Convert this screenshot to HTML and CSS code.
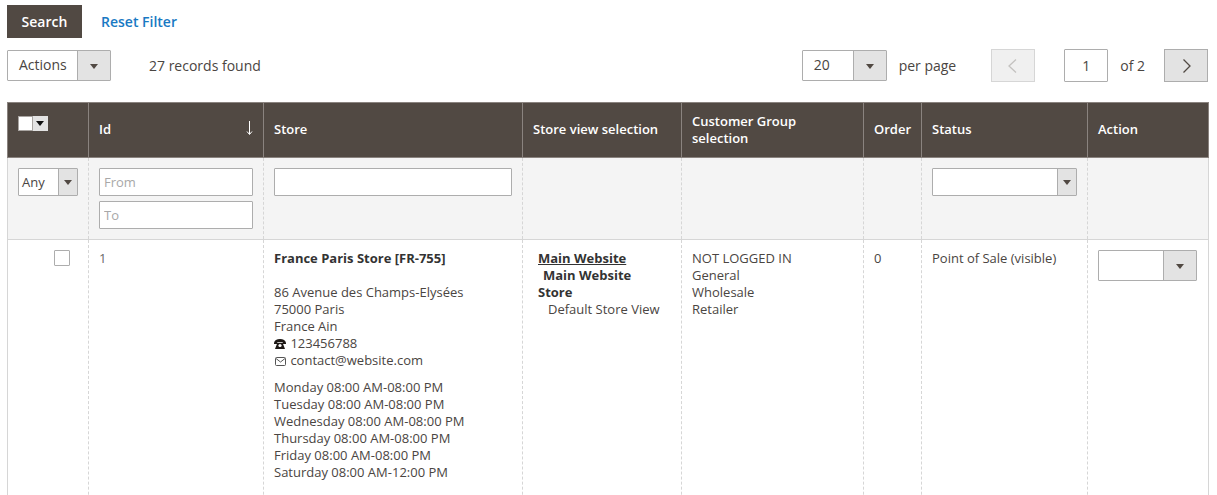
FILE: index.html
```html
<!DOCTYPE html>
<html lang="en">
	<head>
		<meta charset="UTF-8" />
		<title>Stores</title>
		<link rel="stylesheet" href="styles.css">
	</head>
	<body>
		<div class="filter-actions">
			<button class="btn-search">Search</button>
			<a class="reset-link">Reset Filter</a>
		</div>

		<div class="toolbar">
			<div class="select select-actions">
				<span class="select-value">Actions</span>
				<span class="select-arrow"></span>
			</div>
			<span class="records">27 records found</span>

			<div class="pager">
				<div class="select select-perpage">
					<span class="select-value">20</span>
					<span class="select-arrow"></span>
				</div>
				<span class="per-page">per page</span>
				<button class="page-btn page-prev">
					<svg width="10" height="16" viewBox="0 0 10 16"><path d="M8 1.500 1 8l7 6.500" fill="none" stroke="#c4c2c0" stroke-width="1.300"/></svg>
				</button>
				<input class="page-input" value="1">
				<span class="page-total">of 2</span>
				<button class="page-btn page-next">
					<svg width="10" height="16" viewBox="0 0 10 16"><path d="M2.500 1.500 9 8l-6.500 6.500" fill="none" stroke="#514943" stroke-width="1.300"/></svg>
				</button>
			</div>
		</div>

		<table class="grid">
			<colgroup>
				<col class="col-check">
				<col class="col-id">
				<col class="col-store">
				<col class="col-view">
				<col class="col-group">
				<col class="col-order">
				<col class="col-status">
				<col class="col-action">
			</colgroup>
			<thead>
				<tr class="head-row">
					<th class="th-check">
						<div class="mass-select">
							<span class="mass-box"></span>
							<span class="mass-arrow"></span>
						</div>
					</th>
					<th class="th-id">Id
						<svg class="sort-arrow" width="7" height="14" viewBox="0 0 7 14"><path d="M3.500 0v13M1 10.500l2.500 3 2.500-3" fill="none" stroke="#fff"/></svg>
					</th>
					<th>Store</th>
					<th>Store view selection</th>
					<th>Customer Group selection</th>
					<th>Order</th>
					<th>Status</th>
					<th>Action</th>
				</tr>
				<tr class="filter-row">
					<td>
						<div class="select select-any">
							<span class="select-value">Any</span>
							<span class="select-arrow"></span>
						</div>
					</td>
					<td>
						<input class="filter-input" placeholder="From">
						<input class="filter-input" placeholder="To">
					</td>
					<td><input class="filter-input"></td>
					<td></td>
					<td></td>
					<td></td>
					<td>
						<div class="select select-status">
							<span class="select-value"></span>
							<span class="select-arrow"></span>
						</div>
					</td>
					<td></td>
				</tr>
			</thead>
			<tbody>
				<tr class="data-row">
					<td><span class="row-check"></span></td>
					<td class="cell-id">1</td>
					<td>
						<div class="store-name">France Paris Store [FR-755]</div>
						<div class="store-address">
							86 Avenue des Champs-Elysées<br>
							75000 Paris<br>
							France Ain<br>
							<svg class="icon-phone" width="12" height="10" viewBox="0 0 12 10"><path d="M0 4C.3 1.300 2.800 0 6 0s5.700 1.300 6 4v1H8.700V3H3.300v2H0zM3.400 3.800h5.200L11 10H1z" fill="#1d1815"/><circle cx="6" cy="6.500" r="1.600" fill="#fff"/></svg> 123456788<br>
							<svg class="icon-mail" width="11" height="9" viewBox="0 0 11 9"><rect x=".5" y=".5" width="10" height="8" rx="1" fill="none" stroke="#555"/><path d="M1 1.500 5.500 5 10 1.500" fill="none" stroke="#555"/></svg> contact@website.com
						</div>
						<div class="store-hours">
							Monday 08:00 AM-08:00 PM<br>
							Tuesday 08:00 AM-08:00 PM<br>
							Wednesday 08:00 AM-08:00 PM<br>
							Thursday 08:00 AM-08:00 PM<br>
							Friday 08:00 AM-08:00 PM<br>
							Saturday 08:00 AM-12:00 PM
						</div>
					</td>
					<td>
						<div class="scope">
							<div class="scope-website">Main Website</div>
							<div class="scope-store">Main Website Store</div>
							<div class="scope-view">Default Store View</div>
						</div>
					</td>
					<td>NOT LOGGED IN<br>General<br>Wholesale<br>Retailer</td>
					<td>0</td>
					<td>Point of Sale (visible)</td>
					<td class="cell-action">
						<div class="select select-row">
							<span class="select-value"></span>
							<span class="select-arrow"></span>
						</div>
					</td>
				</tr>
			</tbody>
		</table>
	</body>
</html>
```

FILE: styles.css
```css
:root {
	--brown: #514943;
	--text-color: #4a4542;
	--field-border: #adadad;
	--arrow-bg: #e3e3e3;
	--dash: #d6d6d6;
}

* {
	margin: 0;
	padding: 0;
	box-sizing: border-box;
}

html,
body {
	height: 100%;
	overflow: hidden;
}

body {
	font-family: "Open Sans", sans-serif;
	font-size: 13px;
	line-height: 17px;
	color: var(--text-color);
	background-color: #fff;
	padding: 5px 9px 0 7px;
}

.filter-actions {
	display: flex;
	align-items: center;
	gap: 19px;
	height: 33px;
}

.btn-search {
	width: 75px;
	height: 33px;
	border: 0;
	background-color: var(--brown);
	color: #fff;
	font: 600 14px "Open Sans", sans-serif;
}

.reset-link {
	font-size: 14px;
	font-weight: 600;
	color: #1979c3;
}

.toolbar {
	display: flex;
	align-items: center;
	height: 33px;
	margin-top: 11px;
	margin-bottom: 20px;
	font-size: 14px;
}

.select {
	display: flex;
	background-color: #fff;
	border: 1px solid var(--field-border);
	border-radius: 1px;
}

.select-value {
	flex: 1;
	padding-left: 11px;
	line-height: 27px;
}

.select-arrow {
	position: relative;
	flex: none;
	width: 33px;
	background-color: var(--arrow-bg);
	border-left: 1px solid var(--field-border);
}

.select-arrow::after {
	content: "";
	position: absolute;
	top: 50%;
	left: 50%;
	margin: -2px 0 0 -4px;
	border-width: 5px 4px 0;
	border-style: solid;
	border-color: #514943 transparent transparent;
}

.select-actions {
	width: 104px;
	height: 31px;
}

.records {
	margin-left: 38px;
}

.pager {
	display: flex;
	align-items: center;
	margin-left: auto;
}

.select-perpage {
	width: 85px;
	height: 31px;
}

.per-page {
	margin-left: 12px;
	margin-right: 35px;
}

.page-btn {
	display: flex;
	align-items: center;
	justify-content: center;
	width: 44px;
	height: 33px;
	background-color: var(--arrow-bg);
	border: 1px solid var(--field-border);
}

.page-prev {
	background-color: #f0f0f0;
	border-color: #d6d6d6;
	margin-right: 29px;
}

.page-input {
	width: 44px;
	height: 33px;
	border: 1px solid var(--field-border);
	border-radius: 1px;
	text-align: center;
	font: 14px "Open Sans", sans-serif;
	color: var(--text-color);
}

.page-total {
	margin-left: 12px;
	margin-right: 19px;
}

.grid {
	width: 1201px;
	table-layout: fixed;
	border-collapse: collapse;
}

.col-check { width: 81px; }
.col-id { width: 175px; }
.col-store { width: 259px; }
.col-view { width: 159px; }
.col-group { width: 182px; }
.col-order { width: 58px; }
.col-status { width: 166px; }
.col-action { width: 121px; }

.head-row th {
	height: 55px;
	padding: 0 10px 1px;
	background-color: var(--brown);
	border: 1px solid #8a837f;
	color: #fff;
	font-weight: 600;
	text-align: left;
	vertical-align: middle;
}

.head-row .th-check {
	vertical-align: top;
	padding-top: 13px;
}

.th-id {
	position: relative;
}

.sort-arrow {
	position: absolute;
	top: 18px;
	right: 10px;
}

.mass-select {
	display: flex;
	width: 30px;
	height: 15px;
}

.mass-box {
	width: 15px;
	background-color: #fff;
	border: 1px solid #a9a5a2;
}

.mass-arrow {
	position: relative;
	width: 15px;
	background-color: #e3e3e3;
}

.mass-arrow::after {
	content: "";
	position: absolute;
	top: 5px;
	left: 3px;
	border-width: 5px 4px 0;
	border-style: solid;
	border-color: #111 transparent transparent;
}

.filter-row td {
	height: 82px;
	padding: 10px;
	vertical-align: top;
	background-color: #f4f4f4;
	border-left: 1px dashed var(--dash);
	border-right: 1px dashed var(--dash);
	border-bottom: 1px solid #d6d6d6;
}

.filter-row td:first-child {
	border-left: 1px solid #d6d6d6;
}

.filter-row td:last-child {
	border-right: 1px solid #d6d6d6;
}

.filter-input {
	display: block;
	width: 100%;
	height: 28px;
	padding: 0 4px;
	border: 1px solid var(--field-border);
	border-radius: 1px;
	font: 13px "Open Sans", sans-serif;
	color: var(--text-color);
}

.filter-input + .filter-input {
	margin-top: 5px;
}

.filter-input::placeholder {
	color: #a8a8a8;
}

.filter-row .select {
	height: 28px;
}

.filter-row .select-value {
	padding-left: 3px;
	line-height: 26px;
}

.filter-row .select-arrow {
	width: 19px;
}

.data-row td {
	height: 300px;
	padding: 10px;
	vertical-align: top;
	border-left: 1px dashed var(--dash);
	border-right: 1px dashed var(--dash);
}

.data-row td:first-child {
	border-left: 1px solid #d6d6d6;
}

.data-row td:last-child {
	border-right: 1px solid #d6d6d6;
}

.data-row .cell-action {
	padding-right: 11px;
}

.row-check {
	display: block;
	width: 16px;
	height: 16px;
	margin-left: auto;
	margin-right: 8px;
	background-color: #fff;
	border: 1px solid var(--field-border);
	border-radius: 1px;
}

.cell-id {
	color: #6a6a6a;
}

.store-name {
	font-weight: 700;
	margin-bottom: 17px;
	color: #333;
}

.store-hours {
	margin-top: 10px;
}

.icon-phone {
	margin-right: 1px;
	vertical-align: -1px;
}

.icon-mail {
	margin-left: 1px;
	margin-right: 1px;
	vertical-align: -1px;
}

.scope {
	padding-left: 5px;
	max-width: 135px;
	color: #333;
}

.scope-website {
	font-weight: 700;
	text-decoration: underline;
}

.scope-store {
	font-weight: 700;
	text-indent: 5px;
}

.scope-view {
	padding-left: 10px;
	color: var(--text-color);
}

.select-row {
	height: 31px;
}
```
